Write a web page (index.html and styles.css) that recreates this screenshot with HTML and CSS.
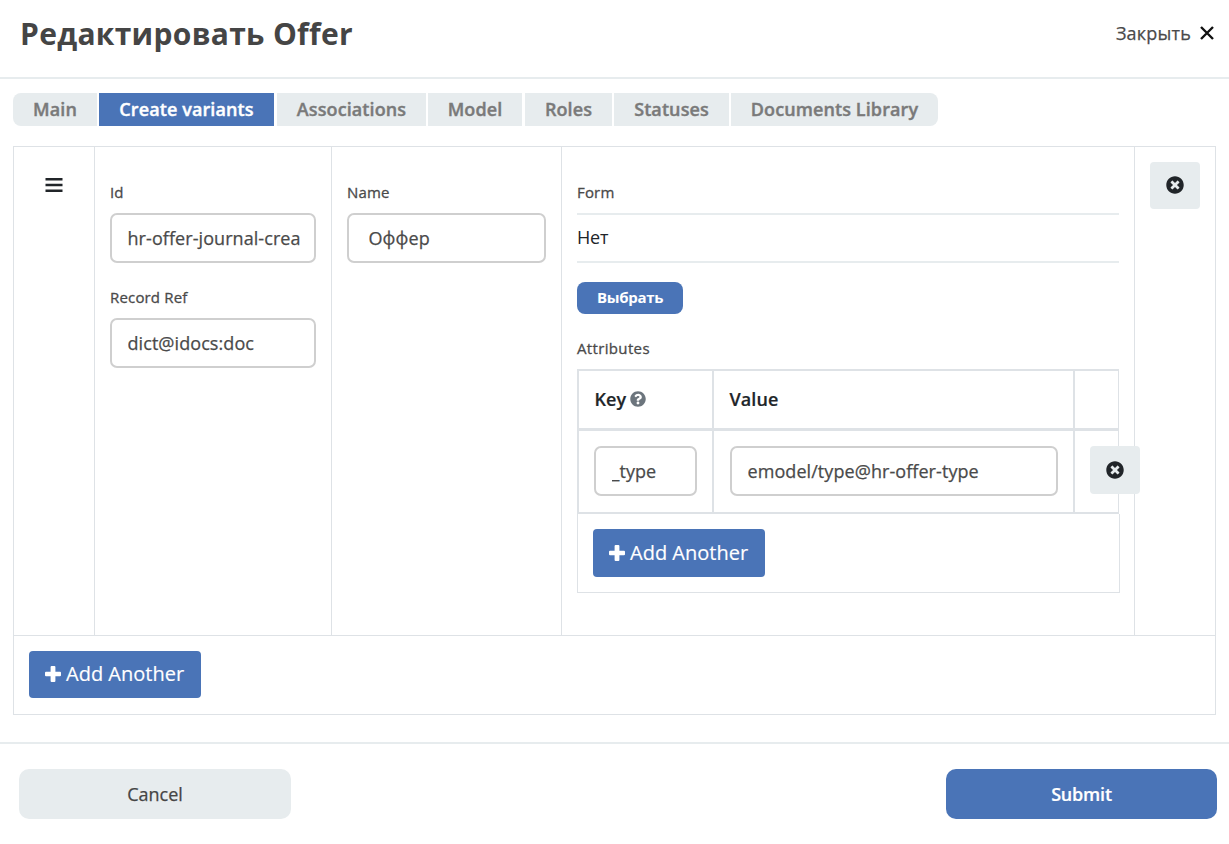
FILE: index.html
```html
<!DOCTYPE html>
<html lang="ru">
<head>
<meta charset="utf-8">
<title>Редактировать Offer</title>
<link rel="stylesheet" href="styles.css">
</head>
<body>
<svg class="sprite" aria-hidden="true">
  <symbol id="plus" viewBox="0 0 16 16"><path d="M6.600 0h2.800q1 0 1 1v4.700H15q1 0 1 1v2.600q0 1-1 1h-4.600V15q0 1-1 1H6.600q-1 0-1-1v-4.700H1q-1 0-1-1V6.700q0-1 1-1h4.600V1q0-1 1-1z"/></symbol>
  <symbol id="remove" viewBox="0 0 512 512"><path d="M256 8C119 8 8 119 8 256s111 248 248 248 248-111 248-248S393 8 256 8zm121.600 313.100c4.700 4.700 4.700 12.300 0 17L338 377.600c-4.700 4.700-12.300 4.700-17 0L256 312l-65.100 65.600c-4.700 4.700-12.300 4.700-17 0L134.400 338c-4.700-4.700-4.700-12.300 0-17l65.600-65-65.600-65.100c-4.700-4.700-4.700-12.300 0-17l39.600-39.600c4.700-4.700 12.300-4.700 17 0l65 65.700 65.100-65.600c4.700-4.700 12.300-4.700 17 0l39.600 39.600c4.700 4.700 4.700 12.300 0 17L312 256z"/></symbol>
  <symbol id="help" viewBox="0 0 512 512"><path d="M504 256c0 137-111 248-248 248S8 393 8 256C8 119.100 119 8 256 8s248 111.100 248 248zM262.700 90c-54.500 0-89.300 23-116.500 63.800-3.500 5.300-2.400 12.400 2.700 16.300l34.700 26.300c5.200 3.900 12.600 3 16.700-2.100 17.900-22.700 30.100-35.800 57.300-35.800 20.400 0 45.700 13.100 45.700 33 0 15-12.400 22.700-32.500 34C247.100 238.500 216 254.900 216 296v4c0 6.600 5.400 12 12 12h56c6.600 0 12-5.400 12-12v-1.300c0-28.500 83.200-29.600 83.200-106.700 0-58-60.200-102-116.500-102zM256 338c-25.400 0-46 20.600-46 46s20.600 46 46 46 46-20.600 46-46-20.600-46-46-46z"/></symbol>
</svg>
<header class="header">
  <h1 class="title">Редактировать Offer</h1>
  <div class="close"><span class="close-label">Закрыть</span><svg class="close-icon" viewBox="0 0 14 14"><path d="M1 1l12 12M13 1L1 13"/></svg></div>
</header>
<nav class="tabs">
  <span class="tab tab-main">Main</span>
  <span class="tab tab-create">Create variants</span>
  <span class="tab tab-assoc">Associations</span>
  <span class="tab tab-model">Model</span>
  <span class="tab tab-roles">Roles</span>
  <span class="tab tab-statuses">Statuses</span>
  <span class="tab tab-docs">Documents Library</span>
</nav>
<main class="grid">
  <div class="row">
    <div class="cell handle"><svg class="menu-icon" viewBox="0 0 18 14"><path d="M.5 1.200h17M.5 7h17M.5 12.800h17"/></svg></div>
    <div class="cell">
      <label class="label">Id</label>
      <input class="input" value="hr-offer-journal-create">
      <label class="label label-next">Record Ref</label>
      <input class="input" value="dict@idocs:doc">
    </div>
    <div class="cell">
      <label class="label">Name</label>
      <input class="input input-name" value="Оффер">
    </div>
    <div class="cell">
      <label class="label">Form</label>
      <div class="form-value">Нет</div>
      <button class="choose">Выбрать</button>
      <label class="label label-attrs">Attributes</label>
      <div class="attrs">
        <div class="attrs-row attrs-head"><div class="th">Key<svg class="help-icon"><use href="#help"/></svg></div><div class="th">Value</div><div class="th"></div></div>
        <div class="attrs-row attrs-body">
          <div class="td"><input class="input" value="_type"></div>
          <div class="td td-value"><input class="input" value="emodel/type@hr-offer-type"></div>
          <div class="td"><button class="remove remove-attr"><svg class="remove-icon"><use href="#remove"/></svg></button></div>
        </div>
      </div>
      <div class="attrs-foot"><button class="add"><svg class="plus-icon"><use href="#plus"/></svg><span class="add-text">Add Another</span></button></div>
    </div>
    <div class="cell"><button class="remove"><svg class="remove-icon"><use href="#remove"/></svg></button></div>
  </div>
  <div class="grid-foot"><button class="add add-outer"><svg class="plus-icon"><use href="#plus"/></svg><span class="add-text">Add Another</span></button></div>
</main>
<footer class="footer">
  <button class="action cancel">Cancel</button>
  <button class="action submit">Submit</button>
</footer>
</body>
</html>
```
FILE: styles.css
```css
* { box-sizing: border-box; }
body { margin: 0; height: 844px; overflow: hidden; background: #fff; color: #212529; font-family: "Open Sans", "Noto Sans", sans-serif; font-size: 18px; }
button, input { margin: 0; border: 0; font-family: inherit; }
.sprite { display: none; }
.header { display: flex; justify-content: space-between; height: 79px; padding: 0 15px 0 20px; border-bottom: 2px solid #e7ecee; }
.title { margin: 13px 0 0; color: #454545; font-size: 30px; font-weight: 700; line-height: 42px; letter-spacing: 0.3px; white-space: nowrap; }
.close { display: flex; gap: 9px; height: 26px; margin-top: 20px; align-items: center; color: #4a4a4a; font-size: 18px; letter-spacing: 0.2px; -webkit-text-stroke: 0.25px; }
.close-icon { width: 14px; height: 14px; fill: none; stroke: #111; stroke-width: 2.4; }
.tabs { display: flex; gap: 2px; height: 33px; margin: 14px 0 0 13px; }
.tab { display: flex; align-items: center; justify-content: center; padding-bottom: 1px; background: #e7ecee; color: #7a7a7a; font-size: 18px; font-weight: 600; letter-spacing: 0.1px; -webkit-text-stroke: 0.4px; white-space: nowrap; }
.tab-main { width: 84px; border-radius: 8px 0 0 8px; }
.tab-create { width: 175px; background: #4a74b7; color: #fff; }
.tab-assoc { width: 149px; margin-left: 1px; }
.tab-model { width: 94px; }
.tab-roles { width: 87px; margin-left: 1px; }
.tab-statuses { width: 115px; }
.tab-docs { width: 207px; border-radius: 0 8px 8px 0; }
.grid { width: 1203px; height: 569px; margin: 20px 0 0 13px; border: 1px solid #dee2e6; }
.row { display: grid; grid-template-columns: 81px 237px 230px 573px 80px; height: 489px; border-bottom: 1px solid #dee2e6; }
.cell { min-width: 0; padding: 15px; border-right: 1px solid #dee2e6; }
.cell:last-child { border-right: 0; }
.handle { display: flex; justify-content: center; align-items: flex-start; padding-top: 31px; }
.menu-icon { width: 18px; height: 14px; stroke: #212529; stroke-width: 2.6; }
.label { display: block; height: 20px; margin: 20px 0 11px; color: #4a4a4a; font-size: 15px; line-height: 20px; letter-spacing: 0.17px; -webkit-text-stroke: 0.3px; }
.label-next { margin-top: 24px; }
.label-attrs { letter-spacing: 0.35px; }
.input { display: block; width: 100%; height: 50px; padding: 0 14px 0 15.5px; border: 2px solid #cfcfcf; border-radius: 7px; background: #fff; color: #4a4a4a; font-size: 18px; letter-spacing: 0.07px; -webkit-text-stroke: 0.25px; }
.input-name { padding-left: 19.5px; }
.form-value { height: 50px; border: solid #e7ecee; border-width: 2px 0; font-size: 18px; line-height: 45px; letter-spacing: -0.2px; }
.choose { display: block; width: 106px; height: 32px; margin-top: 19px; padding: 0 0 2px; border-radius: 8px; background: #4a74b7; color: #fff; font-size: 15px; font-weight: 700; letter-spacing: -0.3px; }
.label-attrs { margin: 24px 0 11px; }
.attrs { width: 542px; height: 145px; border: 2px solid #dee2e6; border-right-width: 1px; }
.attrs-row { display: grid; grid-template-columns: 135px 361px 43px; }
.attrs-head { height: 60px; border-bottom: 3px solid #dee2e6; }
.attrs-body { height: 81px; }
.th, .td { min-width: 0; border-right: 2px solid #dee2e6; }
.th:last-child, .td:last-child { border-right: 0; }
.th { display: flex; gap: 4px; align-items: center; padding: 0 15px 2px 15.5px; font-size: 18px; font-weight: 600; letter-spacing: 0.1px; -webkit-text-stroke: 0.2px; }
.td { padding: 15px 15px 0; }
.td-value { padding-left: 16px; }
.help-icon { width: 16px; height: 16px; margin-top: 1px; fill: #6c757d; }
.remove { display: flex; align-items: center; justify-content: center; width: 50px; height: 47px; padding: 0 0 1px; border-radius: 4px; background: #e7ecee; }
.remove-attr { position: relative; height: 48px; }
.remove-icon { width: 18px; height: 18px; fill: #212529; }
.attrs-foot { width: 543px; height: 79px; padding: 15px; border: 1px solid #dee2e6; border-top: 0; }
.add { display: flex; align-items: center; gap: 5px; width: 172px; height: 48px; padding: 0 0 1px 16px; border-radius: 4px; background: #4a74b7; color: #fff; font-size: 20px; -webkit-text-stroke: 0.15px; white-space: nowrap; }
.add-outer { height: 47px; padding-bottom: 2px; }
.plus-icon { width: 16px; height: 16px; fill: #fff; }
.grid-foot { padding: 15px; }
.footer { display: flex; justify-content: space-between; margin-top: 27px; padding: 25px 12px 0 19px; border-top: 2px solid #e7ecee; }
.action { height: 50px; padding: 0; border-radius: 10px; font-size: 18px; }
.cancel { width: 272px; background: #e7ecee; color: #454545; -webkit-text-stroke: 0.25px; }
.submit { width: 271px; background: #4a74b7; color: #fff; font-weight: 600; letter-spacing: -0.2px; -webkit-text-stroke: 0.2px; }
```
